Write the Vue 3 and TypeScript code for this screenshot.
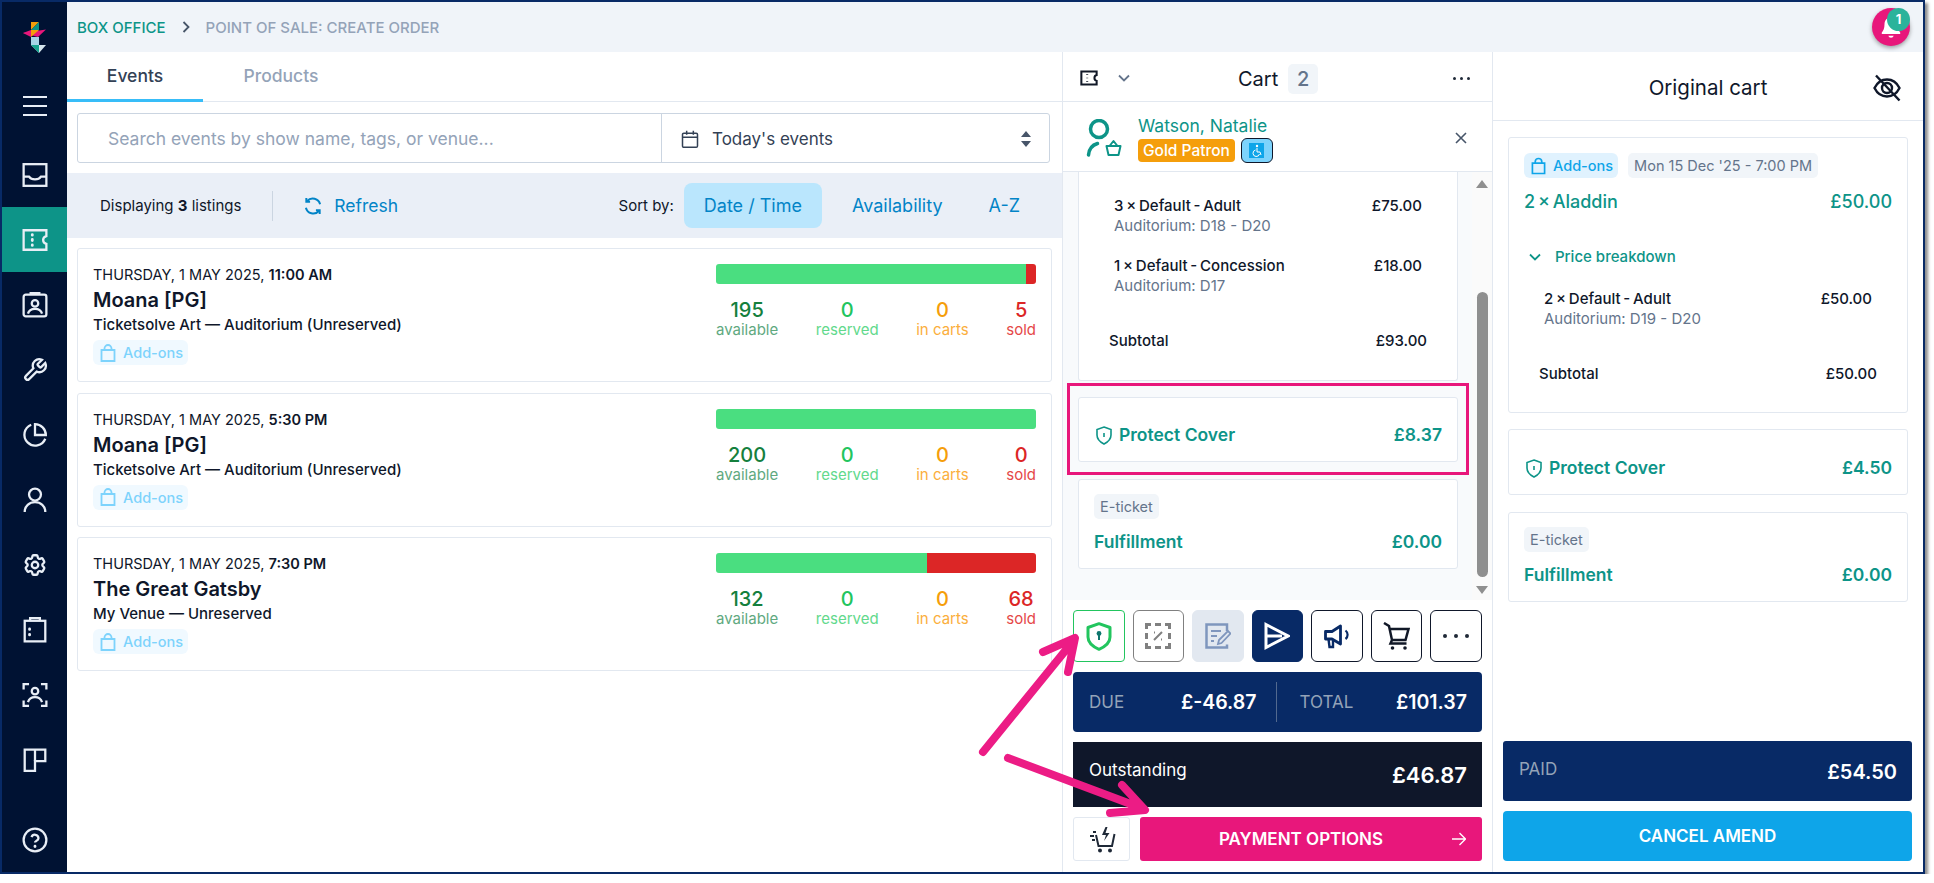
<script setup lang="ts">
interface Listing {
  date: string
  time: string
  title: string
  venue: string
  available: number
  reserved: number
  inCarts: number
  sold: number
}

interface Line {
  label: string
  seats: string
  price: string
}

const listings: Listing[] = [
  { date: 'THURSDAY, 1 MAY 2025,', time: '11:00 AM', title: 'Moana [PG]', venue: 'Ticketsolve Art — Auditorium (Unreserved)', available: 195, reserved: 0, inCarts: 0, sold: 5 },
  { date: 'THURSDAY, 1 MAY 2025,', time: '5:30 PM', title: 'Moana [PG]', venue: 'Ticketsolve Art — Auditorium (Unreserved)', available: 200, reserved: 0, inCarts: 0, sold: 0 },
  { date: 'THURSDAY, 1 MAY 2025,', time: '7:30 PM', title: 'The Great Gatsby', venue: 'My Venue — Unreserved', available: 132, reserved: 0, inCarts: 0, sold: 68 },
]

const cartLines: Line[] = [
  { label: '3 × Default - Adult', seats: 'Auditorium: D18 - D20', price: '£75.00' },
  { label: '1 × Default - Concession', seats: 'Auditorium: D17', price: '£18.00' },
]

const originalLines: Line[] = [
  { label: '2 × Default - Adult', seats: 'Auditorium: D19 - D20', price: '£50.00' },
]

const sideIcons = ['inbox', 'ticket', 'contact', 'wrench', 'pie', 'user', 'gear', 'clipboard', 'scan', 'layout']

function percent(part: number, item: Listing): string {
  return `${(part / (item.available + item.sold)) * 100}%`
}
</script>

<template>
  <div class="frame">
    <aside class="sidebar">
      <div class="logo">
        <svg width="24" height="31" viewBox="0 0 24 31">
          <polygon points="8,0 16,0 8,8" fill="#f59e0b" />
          <polygon points="16,0 16,8 8,8" fill="#0d9488" />
          <polygon points="0,11 23,7.5 15,15" fill="#e8177b" />
          <polygon points="8,8 16,8 8,15" fill="#f59e0b" />
          <polygon points="0,11 8,8 8,15" fill="#e8177b" />
          <rect x="8" y="15" width="8" height="8" fill="#a5d3e6" />
          <polygon points="8,23 23,23 16,31" fill="#d5e6ee" />
          <polygon points="8,23 16,23 16,31" fill="#14a38f" />
        </svg>
      </div>
      <div class="side-item menu-item">
        <svg width="24" height="24" viewBox="0 0 24 24" class="side-icon">
          <path d="M0 3h24M0 12h24M0 21h24" />
        </svg>
      </div>
      <div
        v-for="icon in sideIcons"
        :key="icon"
        class="side-item"
        :class="{ active: icon === 'ticket' }"
      >
        <svg width="26" height="26" viewBox="0 0 24 24" class="side-icon">
          <template v-if="icon === 'inbox'">
            <rect x="1.5" y="2" width="21" height="20" />
            <path d="M1.5 13.5h5c1 1.500 3 2.500 5.500 2.500s4.500-1 5.500-2.500h5" />
          </template>
          <template v-else-if="icon === 'ticket'">
            <path d="M1.5 3h21v5.500c-2 .5-3 2-3 3.500s1 3 3 3.500V21h-21z" />
            <path d="M9.5 7v.5M9.5 11.500v1M9.5 16.500v.5" class="thick" />
          </template>
          <template v-else-if="icon === 'contact'">
            <rect x="1.5" y="2.500" width="21" height="20" rx="2" />
            <path d="M8 2.500V1h8v1.500" />
            <circle cx="12" cy="10.5" r="3" />
            <path d="M5.500 20c.8-3 3.500-4.500 6.500-4.500s5.700 1.500 6.500 4.500" />
          </template>
          <template v-else-if="icon === 'wrench'">
            <path d="M14.7 6.3a1 1 0 0 0 0 1.4l1.6 1.6a1 1 0 0 0 1.4 0l3.77-3.77a6 6 0 0 1-7.94 7.94l-6.91 6.91a2.12 2.12 0 0 1-3-3l6.91-6.91a6 6 0 0 1 7.94-7.94l-3.76 3.76z" />
          </template>
          <template v-else-if="icon === 'pie'">
            <path d="M21.5 15.5A10 10 0 1 1 8.5 2.500" />
            <path d="M12 2a10 10 0 0 1 10 10H12z" />
          </template>
          <template v-else-if="icon === 'user'">
            <circle cx="12" cy="7" r="5.5" />
            <path d="M2.5 23c0-5.500 4.200-9 9.500-9s9.500 3.500 9.500 9" />
          </template>
          <template v-else-if="icon === 'gear'">
            <path d="M9.594 3.94c.09-.542.56-.94 1.11-.94h2.593c.55 0 1.02.398 1.11.94l.213 1.281c.063.374.313.686.645.87.074.04.147.083.22.127.325.196.72.257 1.075.124l1.217-.456a1.125 1.125 0 0 1 1.37.49l1.296 2.247a1.125 1.125 0 0 1-.26 1.431l-1.003.827c-.293.241-.438.613-.43.992a7.723 7.723 0 0 1 0 .255c-.008.378.137.75.43.991l1.004.827c.424.35.534.955.26 1.43l-1.298 2.247a1.125 1.125 0 0 1-1.369.491l-1.217-.456c-.355-.133-.75-.072-1.076.124a6.47 6.47 0 0 1-.22.128c-.331.183-.581.495-.644.869l-.213 1.281c-.09.543-.56.94-1.11.94h-2.594c-.55 0-1.019-.398-1.11-.94l-.213-1.281c-.062-.374-.312-.686-.644-.87a6.52 6.52 0 0 1-.22-.127c-.325-.196-.72-.257-1.076-.124l-1.217.456a1.125 1.125 0 0 1-1.369-.49l-1.297-2.247a1.125 1.125 0 0 1 .26-1.431l1.004-.827c.292-.24.437-.613.43-.991a6.932 6.932 0 0 1 0-.255c.007-.38-.138-.751-.43-.992l-1.004-.827a1.125 1.125 0 0 1-.26-1.43l1.297-2.247a1.125 1.125 0 0 1 1.37-.491l1.216.456c.356.133.751.072 1.076-.124.072-.044.146-.086.22-.128.332-.183.582-.495.644-.869l.214-1.28Z" />
            <circle cx="12" cy="12" r="3" />
          </template>
          <template v-else-if="icon === 'clipboard'">
            <rect x="2.5" y="3.5" width="19" height="19" />
            <path d="M7.5 3.5V1h9v2.500" />
            <path d="M7 11v.5M7 16v.5" class="thick" />
          </template>
          <template v-else-if="icon === 'scan'">
            <path d="M1.5 7V2h5M17.5 2h5v5M22.5 17v5h-5M6.5 22h-5v-5" />
            <circle cx="12" cy="8.5" r="3" />
            <path d="M5.5 18.500c1-3 3.500-4.500 6.500-4.500s5.500 1.500 6.500 4.500" />
          </template>
          <template v-else-if="icon === 'layout'">
            <path d="M2.5 2.500h19v10.500h-9.500v9h-9.500z" />
            <path d="M12 2.500V13" />
          </template>
        </svg>
      </div>
      <div class="side-item help-item">
        <svg width="26" height="26" viewBox="0 0 24 24" class="side-icon">
          <circle cx="12" cy="12" r="10.5" />
          <path d="M8.8 9.300a3.300 3.300 0 0 1 6.400 1c0 2.200-3.200 2.700-3.200 4" />
          <path d="M12 17.700v.3" class="thick" />
        </svg>
      </div>
    </aside>

    <div class="main">
      <header class="topbar">
        <nav class="crumbs">
          <span class="crumb-root">BOX OFFICE</span>
          <svg width="8" height="12" viewBox="0 0 8 12" class="crumb-sep">
            <path d="M1.5 1l5 5-5 5" />
          </svg>
          <span class="crumb-page">POINT OF SALE: CREATE ORDER</span>
        </nav>
        <div class="bell">
          <svg width="26" height="26" viewBox="0 0 24 24">
            <path d="M12 3c-3.500 0-6 2.800-6 6.500 0 4-1 6-2.500 7.500v1.500h17V17c-1.500-1.500-2.500-3.500-2.500-7.500C18 5.800 15.500 3 12 3z" fill="#fff" />
            <path d="M9.5 20a2.600 2.600 0 0 0 5 0z" fill="#fff" />
          </svg>
          <span class="bell-count">1</span>
        </div>
      </header>

      <div class="panels">
        <section class="listings">
          <div class="tabs">
            <div class="tab tab-active">Events</div>
            <div class="tab tab-products">Products</div>
          </div>
          <div class="search-wrap">
            <div class="search">
              <div class="search-text">Search events by show name, tags, or venue...</div>
              <div class="search-date">
                <svg width="20" height="20" viewBox="0 0 24 24" class="stroke-dark">
                  <rect x="3" y="5" width="18" height="17" rx="1.5" />
                  <path d="M3 10h18M8 2v5M16 2v5" />
                </svg>
                <span>Today's events</span>
                <svg width="12" height="18" viewBox="0 0 12 18" class="sort-icon">
                  <path d="M6 1l5 6H1zM6 17l5-6H1z" />
                </svg>
              </div>
            </div>
          </div>
          <div class="sortbar">
            <span class="count">Displaying <b>3</b> listings</span>
            <span class="sort-divider"></span>
            <span class="refresh">
              <svg width="20" height="20" viewBox="0 0 24 24">
                <path d="M20.5 10A9 9 0 0 0 5 6M3.500 14A9 9 0 0 0 19 18" />
                <path d="M4 2.500V7h4.500M20 21.500V17h-4.500" />
              </svg>
              Refresh
            </span>
            <span class="sort-label">Sort by:</span>
            <span class="sort-opt sort-on">Date / Time</span>
            <span class="sort-opt">Availability</span>
            <span class="sort-opt">A-Z</span>
          </div>
          <div class="listing-list">
            <article v-for="item in listings" :key="item.time" class="listing">
              <div class="listing-info">
                <div class="listing-date">{{ item.date }} <b>{{ item.time }}</b></div>
                <h2 class="listing-title">{{ item.title }}</h2>
                <div class="listing-venue">{{ item.venue }}</div>
                <span class="addons addons-pale">
                  <svg width="16" height="18" viewBox="0 0 16 18" class="bag">
                    <path d="M1.5 6h13v11h-13zM4.500 6V4.500a3.500 3.500 0 0 1 7 0V6" />
                  </svg>
                  Add-ons
                </span>
              </div>
              <div class="availability">
                <div class="bar">
                  <div class="bar-free" :style="{ width: percent(item.available, item) }"></div>
                  <div v-if="item.sold > 0" class="bar-sold"></div>
                </div>
                <div class="stats">
                  <div class="stat stat-available"><strong>{{ item.available }}</strong><span>available</span></div>
                  <div class="stat stat-reserved"><strong>{{ item.reserved }}</strong><span>reserved</span></div>
                  <div class="stat stat-carts"><strong>{{ item.inCarts }}</strong><span>in carts</span></div>
                  <div class="stat stat-sold"><strong>{{ item.sold }}</strong><span>sold</span></div>
                </div>
              </div>
            </article>
          </div>
        </section>

        <section class="cart">
          <div class="cart-head">
            <svg width="18" height="16" viewBox="0 0 24 22" class="cart-type">
              <path d="M1.5 2h21v5c-2 .5-3 2.200-3 4s1 3.500 3 4v5h-21z" />
              <path d="M9.5 6v1M9.5 10.500v1M9.5 15v1" />
            </svg>
            <svg width="12" height="8" viewBox="0 0 12 8" class="cart-chevron">
              <path d="M1 1.5l5 5 5-5" />
            </svg>
            <div class="cart-title">
              Cart
              <span class="cart-count">2</span>
            </div>
            <span class="dots"><i></i><i></i><i></i></span>
          </div>
          <div class="customer">
            <svg width="36" height="38" viewBox="0 0 36 38" class="customer-icon">
              <circle cx="13" cy="10" r="8.5" stroke-width="3.5" />
              <path d="M2.5 36c.5-6 4-10 9-11.500" stroke-width="3.5" />
              <path d="M20.5 27h14l-2 9h-10zM23.500 27l4-5 4 5" stroke-width="2" />
            </svg>
            <div class="customer-info">
              <div class="customer-name">Watson, Natalie</div>
              <div class="customer-tags">
                <span class="tag-gold">Gold Patron</span>
                <span class="tag-access">
                  <svg width="15" height="15" viewBox="0 0 15 15">
                    <rect width="15" height="15" fill="#0ea5e9" />
                    <circle cx="8" cy="3" r="1.2" fill="#fff" />
                    <path d="M8 5v4h3l1 3M6.500 7a3.300 3.300 0 1 0 4 4" fill="none" stroke="#fff" stroke-width="1" />
                  </svg>
                </span>
              </div>
            </div>
            <svg width="12" height="12" viewBox="0 0 12 12" class="customer-close">
              <path d="M1 1l10 10M11 1L1 11" />
            </svg>
          </div>

          <div class="cart-scroll">
            <div class="cart-items">
              <div class="box box-clipped">
                <div v-for="line in cartLines" :key="line.label" class="line">
                  <div>
                    <div class="line-label">{{ line.label }}</div>
                    <div class="line-seats">{{ line.seats }}</div>
                  </div>
                  <div class="line-price">{{ line.price }}</div>
                </div>
                <div class="subtotal subtotal-cart">
                  <span>Subtotal</span>
                  <span>£93.00</span>
                </div>
              </div>
              <div class="box box-cover highlighted">
                <div class="teal-row">
                  <span class="cover-name">
                    <svg width="16" height="19" viewBox="0 0 16 19" class="cover-shield">
                      <path d="M8 1l7 2.500V9c0 4-3 7-7 9-4-2-7-5-7-9V3.500z" />
                      <path d="M8 7v4" />
                    </svg>
                    Protect Cover
                  </span>
                  <span>£8.37</span>
                </div>
              </div>
              <div class="box box-fulfil">
                <span class="chip">E-ticket</span>
                <div class="teal-row fulfil-row">
                  <span>Fulfillment</span>
                  <span>£0.00</span>
                </div>
              </div>
            </div>
            <div class="scrollbar">
              <span class="scroll-up"></span>
              <span class="scroll-thumb"></span>
              <span class="scroll-down"></span>
            </div>
          </div>

          <div class="cart-foot">
            <div class="actions">
              <button type="button" class="action action-green">
                <svg width="26" height="29" viewBox="0 0 26 29" fill="none" stroke="#22c55e" stroke-width="3">
                  <path d="M13 1.700l11 3.800V15c0 5.500-4.500 9.500-11 12.300C6.500 24.500 2 20.500 2 15V5.500z" stroke-linejoin="round" />
                  <circle cx="13" cy="11.500" r="2.400" fill="#0f766e" stroke="none" />
                  <path d="M13 12v6" stroke="#0f766e" stroke-width="2" />
                </svg>
              </button>
              <button type="button" class="action action-grey">
                <svg width="26" height="26" viewBox="0 0 26 26" fill="none" stroke="#808080" stroke-width="3">
                  <path d="M1.5 6V1.500H6M10 1.500h6M20 1.500h4.500V6M24.500 10v6M24.500 20v4.500H20M16 24.500h-6M6 24.500H1.500V20M1.500 16v-6" />
                  <path d="M9 17l8-8M9 9.500h1M16 16.500h1" stroke-width="2" />
                </svg>
              </button>
              <button type="button" class="action action-off">
                <svg width="26" height="26" viewBox="0 0 26 26" fill="none" stroke="#7f96bd" stroke-width="2.5">
                  <path d="M22 8V1.500H1.500v23H22v-3" />
                  <path d="M6 8h10M6 13h6M6 18h3" stroke-width="2.2" />
                  <path d="M13 21l1-4 9-9 2.500 2.500-9 9.500z" stroke-width="1.8" fill="#e2e8f0" />
                </svg>
              </button>
              <button type="button" class="action action-navy">
                <svg width="26" height="28" viewBox="0 0 26 28" fill="none" stroke="#fff" stroke-width="3">
                  <path d="M2 2.500L24 14 2 25.500z" />
                  <path d="M2 14h16" />
                </svg>
              </button>
              <button type="button" class="action">
                <svg width="26" height="25" viewBox="0 0 26 25" fill="none" stroke="#082a66" stroke-width="2.8">
                  <path d="M1.500 7.500h6.500L16.500 2v18L8 15H1.500z" stroke-linejoin="round" />
                  <path d="M9 15v8H5.500l-1-8" stroke-width="2.4" />
                  <path d="M21.500 6.500c2.800 2.200 2.800 6.500 0 8.500" stroke-width="2.2" />
                </svg>
              </button>
              <button type="button" class="action">
                <svg width="27" height="28" viewBox="0 0 27 28" fill="none" stroke="#111827" stroke-width="2.5">
                  <path d="M1 1l5 3 3 14-1.500 3.500h16M6.500 7h19l-3 11H9" />
                  <circle cx="9.500" cy="26" r="1.800" fill="#111827" stroke="none" />
                  <circle cx="22" cy="26" r="1.800" fill="#111827" stroke="none" />
                </svg>
              </button>
              <button type="button" class="action">
                <span class="dots dots-big"><i></i><i></i><i></i></span>
              </button>
            </div>

            <div class="due-bar">
              <div class="due-part">
                <span class="due-label">DUE</span>
                <span class="due-value">£-46.87</span>
              </div>
              <span class="due-divider"></span>
              <div class="due-part">
                <span class="due-label">TOTAL</span>
                <span class="due-value">£101.37</span>
              </div>
            </div>

            <div class="outstanding">
              <span class="outstanding-label">Outstanding</span>
              <span class="outstanding-value">£46.87</span>
            </div>

            <div class="pay-row">
              <button type="button" class="quick">
                <svg width="28" height="28" viewBox="0 0 28 28" fill="none" stroke="#1f2937" stroke-width="2">
                  <path d="M8 10l2.500 11h13.500l2.500-12" />
                  <path d="M17.500 2l-3.500 8h4l-2 6 5.500-8h-4l2-6z" fill="#1f2937" stroke="none" />
                  <path d="M5 7h3M2 11h4M4 15h3" />
                  <circle cx="12" cy="25.5" r="2" fill="#1f2937" stroke="none" />
                  <circle cx="22" cy="25.5" r="2" fill="#1f2937" stroke="none" />
                </svg>
              </button>
              <button type="button" class="pay">
                PAYMENT OPTIONS
                <svg width="14" height="14" viewBox="0 0 14 14" class="pay-arrow">
                  <path d="M0 7h13M7.500 1l6 6-6 6" />
                </svg>
              </button>
            </div>
          </div>
        </section>

        <section class="original">
          <div class="original-head">
            <span class="original-title">Original cart</span>
            <svg width="28" height="28" viewBox="0 0 28 28" class="eye-off">
              <path d="M1.500 14C4.500 8 9 5.500 14 5.500S23.500 8 26.500 14c-3 6-7.500 8.500-12.500 8.500S4.500 20 1.500 14z" />
              <circle cx="14" cy="14" r="5" />
              <path d="M3 1.500L26.500 26.500" />
            </svg>
          </div>
          <div class="original-body">
            <div class="box box-show">
              <div class="pills">
                <span class="addons">
                  <svg width="15" height="18" viewBox="0 0 16 18" class="bag">
                    <path d="M1.500 6h13v11h-13zM4.500 6V4.500a3.500 3.500 0 0 1 7 0V6" />
                  </svg>
                  Add-ons
                </span>
                <span class="chip">Mon 15 Dec '25 - 7:00 PM</span>
              </div>
              <div class="teal-row show-row">
                <span>2 × Aladdin</span>
                <span>£50.00</span>
              </div>
              <div class="breakdown">
                <svg width="12" height="8" viewBox="0 0 12 8">
                  <path d="M1 1.500l5 5 5-5" />
                </svg>
                Price breakdown
              </div>
              <div v-for="line in originalLines" :key="line.label" class="line original-line">
                <div>
                  <div class="line-label">{{ line.label }}</div>
                  <div class="line-seats">{{ line.seats }}</div>
                </div>
                <div class="line-price">{{ line.price }}</div>
              </div>
              <div class="subtotal subtotal-original">
                <span>Subtotal</span>
                <span>£50.00</span>
              </div>
            </div>
            <div class="box box-cover">
              <div class="teal-row">
                <span class="cover-name">
                  <svg width="16" height="19" viewBox="0 0 16 19" class="cover-shield">
                    <path d="M8 1l7 2.500V9c0 4-3 7-7 9-4-2-7-5-7-9V3.500z" />
                    <path d="M8 7v4" />
                  </svg>
                  Protect Cover
                </span>
                <span>£4.50</span>
              </div>
            </div>
            <div class="box box-fulfil">
              <span class="chip">E-ticket</span>
              <div class="teal-row fulfil-row">
                <span>Fulfillment</span>
                <span>£0.00</span>
              </div>
            </div>
          </div>
          <div class="original-foot">
            <div class="paid">
              <span class="paid-label">PAID</span>
              <span class="paid-value">£54.50</span>
            </div>
            <button type="button" class="cancel">CANCEL AMEND</button>
          </div>
        </section>
      </div>
    </div>

    <svg class="arrows" width="1925" height="874" viewBox="0 0 1925 874">
      <path d="M983 752L1074 640M1043 652L1075 638L1068 672" />
      <path d="M1008 758L1144 809M1122 785L1145 810L1110 813" />
    </svg>
  </div>
</template>

<style scoped>
.frame {
  position: relative;
  display: flex;
  box-sizing: border-box;
  width: 1925px;
  height: 874px;
  border: 2px solid #082a66;
  background: #fff;
  box-shadow: 3px 3px 3px rgba(0, 0, 0, 0.45);
  color: #0f172a;
}

.sidebar {
  display: flex;
  flex-direction: column;
  flex: none;
  width: 65px;
  background: #001233;
}

.logo {
  display: flex;
  justify-content: center;
  align-items: flex-start;
  height: 71px;
  padding-top: 20px;
  box-sizing: border-box;
}

.side-item {
  display: flex;
  justify-content: center;
  align-items: center;
  flex: none;
  height: 65px;
}

.menu-item {
  margin-bottom: 4px;
}

.help-item {
  margin-top: auto;
}

.side-item.active {
  background: #0d9488;
}

.side-icon {
  fill: none;
  stroke: #e8eef6;
  stroke-width: 2.1;
}

.thick {
  stroke-width: 2.6;
  stroke-linecap: round;
}

.main {
  display: flex;
  flex-direction: column;
  flex: 1;
  min-width: 0;
}

.topbar {
  display: flex;
  justify-content: space-between;
  align-items: center;
  flex: none;
  height: 50px;
  padding: 0 13px 0 10px;
  background: #f0f4f9;
}

.crumbs {
  display: flex;
  align-items: center;
  font-size: 15px;
  font-weight: 500;
}

.crumb-root {
  color: #0d9488;
}

.crumb-sep {
  margin: 0 16px;
  fill: none;
  stroke: #475569;
  stroke-width: 1.8;
}

.crumb-page {
  color: #94a3b8;
}

.bell {
  position: relative;
  display: flex;
  justify-content: center;
  align-items: center;
  width: 38px;
  height: 38px;
  border-radius: 50%;
  background: #e8177b;
  box-shadow: 0 2px 4px rgba(0, 0, 0, 0.35);
}

.bell-count {
  position: absolute;
  top: 0;
  right: 0;
  width: 23px;
  height: 23px;
  border-radius: 50%;
  background: #2bb39b;
  color: #fff;
  font-size: 13px;
  font-weight: 700;
  line-height: 23px;
  text-align: center;
}

.panels {
  display: flex;
  flex: 1;
  min-height: 0;
}

.listings {
  display: flex;
  flex-direction: column;
  flex: none;
  width: 995px;
}

.tabs {
  display: flex;
  flex: none;
  height: 50px;
  border-bottom: 1px solid #e2e8f0;
  box-sizing: border-box;
}

.tab {
  width: 136px;
  color: #94a3b8;
  font-size: 17.5px;
  font-weight: 500;
  line-height: 47px;
  text-align: center;
}

.tab-products {
  width: 156px;
}

.tab-active {
  margin-bottom: -1px;
  border-bottom: 3px solid #38bdf8;
  color: #334155;
}

.search-wrap {
  flex: none;
  padding: 11px 12px 10px 10px;
}

.search {
  display: flex;
  box-sizing: border-box;
  height: 50px;
  border: 1px solid #cbd5e1;
  border-radius: 3px;
}

.search-text {
  flex: 1;
  padding-left: 30px;
  color: #94a3b8;
  font-size: 17.5px;
  line-height: 50px;
}

.search-date {
  display: flex;
  align-items: center;
  flex: none;
  box-sizing: border-box;
  width: 388px;
  padding: 2px 17px 0 18px;
  border-left: 1px solid #cbd5e1;
  color: #334155;
  font-size: 17px;
}

.search-date span {
  flex: 1;
  margin-left: 12px;
}

.stroke-dark {
  fill: none;
  stroke: #334155;
  stroke-width: 1.8;
}

.sort-icon {
  fill: #475569;
}

.sortbar {
  display: flex;
  align-items: center;
  flex: none;
  height: 65px;
  padding: 0 17px 0 33px;
  background: #eaeff7;
}

.count {
  font-size: 15px;
}

.sort-divider {
  width: 1px;
  height: 30px;
  margin: 0 30px 0 31px;
  background: #cbd5e1;
}

.refresh {
  display: flex;
  align-items: center;
  gap: 11px;
  margin-right: auto;
  color: #0284c7;
  font-size: 17.5px;
}

.refresh svg {
  fill: none;
  stroke: #0284c7;
  stroke-width: 2.4;
}

.sort-label {
  margin-right: 10px;
  font-size: 15px;
}

.sort-opt {
  padding: 0 25px;
  color: #0284c7;
  font-size: 18px;
  line-height: 45px;
}

.sort-opt:last-child {
  padding-left: 21px;
}

.sort-on {
  margin-right: 5px;
  padding: 0 20px;
  border-radius: 8px;
  background: #bae6fd;
}

.listing-list {
  display: flex;
  flex-direction: column;
  gap: 10.5px;
  padding: 10px 10px 0;
}

.listing {
  display: flex;
  justify-content: space-between;
  box-sizing: border-box;
  height: 134px;
  padding: 15px;
  border: 1px solid #e2e8f0;
  border-radius: 3px;
}

.listing-date {
  font-size: 14.5px;
  line-height: 20px;
  margin-top: 1px;
}

.listing-date b {
  font-weight: 600;
}

.listing-title {
  margin: 0;
  font-size: 20px;
  font-weight: 600;
  line-height: 30px;
}

.listing-venue {
  font-size: 15px;
  font-weight: 500;
  line-height: 20px;
}

.addons {
  display: inline-flex;
  align-items: center;
  gap: 7px;
  box-sizing: border-box;
  height: 25px;
  padding: 0 5px 0 7px;
  border-radius: 6px;
  background: #e0f2fe;
  color: #0ea5e9;
  font-size: 14.5px;
  font-weight: 500;
}

.addons-pale {
  margin-top: 5px;
  background: #f0f9ff;
  color: #7dd3fc;
}

.bag {
  fill: none;
  stroke: currentColor;
  stroke-width: 1.8;
}

.availability {
  flex: none;
  width: 320px;
}

.bar {
  display: flex;
  overflow: hidden;
  height: 20px;
  border-radius: 3px;
}

.bar-free {
  background: #4ade80;
}

.bar-sold {
  flex: 1;
  min-width: 10px;
  background: #dc2626;
}

.stats {
  display: flex;
  justify-content: space-between;
  margin-top: 15px;
}

.stat {
  display: flex;
  flex-direction: column;
  align-items: center;
}

.stat strong {
  font-size: 20px;
  font-weight: 500;
  line-height: 22px;
}

.stat span {
  font-size: 15px;
  line-height: 18px;
}

.stat-available strong { color: #15803d; }
.stat-available span { color: #5fa97f; }
.stat-reserved strong { color: #22c55e; }
.stat-reserved span { color: #62d98c; }
.stat-carts strong { color: #f59e0b; }
.stat-carts span { color: #fbae3c; }
.stat-sold strong { color: #dc2626; }
.stat-sold span { color: #e54848; }

.cart {
  display: flex;
  flex-direction: column;
  flex: none;
  box-sizing: border-box;
  width: 430px;
  border-left: 1px solid #e2e8f0;
}

.cart-head {
  display: flex;
  align-items: center;
  flex: none;
  box-sizing: border-box;
  height: 50px;
  padding: 3px 22px 0 17px;
  border-bottom: 1px solid #e2e8f0;
}

.cart-type {
  fill: none;
  stroke: #111827;
  stroke-width: 2.8;
}

.cart-chevron {
  margin-left: 20px;
  fill: none;
  stroke: #64748b;
  stroke-width: 1.8;
}

.cart-title {
  display: flex;
  align-items: center;
  gap: 10px;
  margin: 2px auto 0 108px;
  font-size: 20px;
}

.cart-count {
  width: 30px;
  border-radius: 5px;
  background: #f1f5f9;
  color: #64748b;
  font-weight: 500;
  line-height: 30px;
  text-align: center;
}

.dots {
  display: inline-flex;
  gap: 4px;
}

.dots i {
  width: 3px;
  height: 3px;
  border-radius: 50%;
  background: #1f2937;
}

.dots-big {
  gap: 7px;
}

.dots-big i {
  width: 4px;
  height: 4px;
}

.customer {
  display: flex;
  align-items: center;
  flex: none;
  box-sizing: border-box;
  height: 70px;
  padding: 2px 25px 0 23px;
  border-bottom: 1px solid #e2e8f0;
}

.customer-icon {
  flex: none;
  fill: none;
  stroke: #0d9488;
  stroke-linecap: round;
  stroke-linejoin: round;
}

.customer-info {
  flex: 1;
  margin: 2px 0 0 16px;
}

.customer-name {
  color: #0d9488;
  font-size: 17.5px;
  line-height: 24px;
}

.customer-tags {
  display: flex;
  align-items: center;
  gap: 6px;
}

.tag-gold {
  padding: 0 5px;
  border-radius: 4px;
  background: #f59e0b;
  color: #fff;
  font-size: 15.5px;
  font-weight: 500;
  line-height: 23px;
}

.tag-access {
  display: flex;
  justify-content: center;
  align-items: center;
  box-sizing: border-box;
  width: 32px;
  height: 25px;
  border: 1px solid #0f172a;
  border-radius: 6px;
  background: #7dd3fc;
}

.customer-close {
  fill: none;
  stroke: #475569;
  stroke-width: 1.6;
}

.cart-scroll {
  display: flex;
  flex: none;
  height: 428px;
  background: #f8fafc;
}

.cart-items {
  display: flex;
  flex-direction: column;
  flex: 1;
  padding: 0 14px 0 15px;
}

.box {
  box-sizing: border-box;
  border: 1px solid #e2e8f0;
  border-radius: 3px;
  background: #fff;
}

.box-clipped {
  height: 209px;
  padding: 24px 15px 0;
  border-top: 0;
  border-radius: 0 0 3px 3px;
}

.line {
  display: flex;
  justify-content: space-between;
  margin: 0 20px 20px;
}

.line-label {
  font-size: 15px;
  font-weight: 500;
  line-height: 20px;
  word-spacing: -1.2px;
}

.line-price {
  font-size: 15px;
  font-weight: 500;
  line-height: 20px;
}

.line-seats {
  color: #64748b;
  font-size: 15px;
  line-height: 20px;
}

.subtotal {
  display: flex;
  justify-content: space-between;
  margin: 0 15px;
  font-size: 15px;
  font-weight: 500;
  line-height: 20px;
}

.subtotal-cart {
  margin-top: 35px;
}

.box-cover {
  position: relative;
  height: 66px;
  margin-top: 16px;
  padding: 27px 15px 0;
}

.highlighted {
  height: 65px;
  padding-top: 26px;
}

.highlighted::after {
  content: '';
  position: absolute;
  inset: -15px -12px -14px -12px;
  border: 3px solid #e8177b;
  pointer-events: none;
}

.teal-row {
  display: flex;
  justify-content: space-between;
  color: #0d9488;
  font-size: 17.5px;
  font-weight: 600;
  line-height: 22px;
}

.cover-name {
  display: flex;
  align-items: center;
  gap: 7px;
  padding-left: 2px;
}

.cover-shield {
  fill: none;
  stroke: #0d9488;
  stroke-width: 1.6;
}

.box-fulfil {
  height: 90px;
  margin-top: 17px;
  padding: 14px 15px 0;
}

.chip {
  display: inline-block;
  padding: 0 6px;
  border-radius: 5px;
  background: #f1f5f9;
  color: #64748b;
  font-size: 14.5px;
  line-height: 25px;
}

.fulfil-row {
  margin-top: 12px;
}

.scrollbar {
  display: flex;
  flex-direction: column;
  align-items: center;
  flex: none;
  width: 20px;
  height: 428px;
  background: #fafafa;
}

.scroll-up,
.scroll-down {
  flex: none;
  width: 0;
  height: 0;
  border-right: 6px solid transparent;
  border-left: 6px solid transparent;
}

.scroll-up {
  margin-top: 8px;
  border-bottom: 8px solid #8f8f8f;
}

.scroll-thumb {
  flex: none;
  width: 11px;
  height: 285px;
  margin-top: 104px;
  border-radius: 6px;
  background: #8f8f8f;
}

.scroll-down {
  margin-top: 9px;
  border-top: 8px solid #8f8f8f;
}

.cart-foot {
  display: flex;
  flex-direction: column;
  flex: 1;
  gap: 10px;
  padding: 10px 10px 11px;
}

.actions {
  display: grid;
  grid-template-columns: repeat(7, 1fr);
  gap: 8px;
  height: 52px;
}

.action {
  display: flex;
  justify-content: center;
  align-items: center;
  padding: 0;
  border: 1px solid #0f172a;
  border-radius: 6px;
  background: #fff;
}

.action-green {
  border-color: #22c55e;
  border-radius: 4px;
}

.action-grey {
  border-color: #808080;
}

.action-off {
  border-color: #e2e8f0;
  background: #e2e8f0;
}

.action-navy {
  border-color: #082a66;
  background: #082a66;
}

.due-bar {
  display: flex;
  align-items: center;
  height: 60px;
  border-radius: 4px;
  background: #082a66;
}

.due-part {
  display: flex;
  justify-content: space-between;
  align-items: center;
  flex: 1;
  padding: 0 15px 0 16px;
}

.due-part:first-child {
  padding-right: 19px;
}

.due-part:last-child {
  padding-left: 23px;
}

.due-label {
  color: #94a3b8;
  font-size: 17px;
}

.due-value {
  color: #fff;
  font-size: 19.5px;
  font-weight: 600;
}

.due-divider {
  flex: none;
  width: 1px;
  height: 40px;
  background: #52698f;
}

.outstanding {
  display: flex;
  justify-content: space-between;
  height: 65px;
  padding: 0 15px 0 16px;
  background: #0f172a;
}

.outstanding-label {
  margin-top: 16px;
  color: #fff;
  font-size: 17px;
  line-height: 24px;
}

.outstanding-value {
  margin-top: 18px;
  color: #fff;
  font-size: 22px;
  font-weight: 600;
  line-height: 30px;
}

.pay-row {
  display: flex;
  gap: 10px;
  height: 44px;
}

.quick {
  display: flex;
  justify-content: center;
  align-items: center;
  flex: none;
  width: 57px;
  padding: 0;
  border: 1px solid #e2e8f0;
  border-radius: 3px;
  background: #fff;
}

.pay {
  position: relative;
  flex: 1;
  padding: 0 20px 0 0;
  border: 0;
  border-radius: 3px;
  background: #e8177b;
  color: #fff;
  font-family: inherit;
  font-size: 17px;
  font-weight: 600;
}

.pay-arrow {
  position: absolute;
  top: 15px;
  right: 16px;
  fill: none;
  stroke: #fff;
  stroke-width: 1.4;
}

.original {
  display: flex;
  flex-direction: column;
  flex: 1;
  min-width: 0;
  border-left: 1px solid #e2e8f0;
}

.original-head {
  position: relative;
  display: flex;
  justify-content: center;
  align-items: center;
  flex: none;
  box-sizing: border-box;
  height: 69px;
  padding-top: 3px;
  border-bottom: 1px solid #e2e8f0;
}

.original-title {
  font-size: 20.5px;
}

.eye-off {
  position: absolute;
  top: 22px;
  right: 22px;
  fill: none;
  stroke: #0f172a;
  stroke-width: 2.4;
}

.original-body {
  flex: 1;
  padding: 16px 15px 0 15px;
}

.box-show {
  height: 276px;
  padding: 15px;
}

.pills {
  display: flex;
  gap: 10px;
}

.show-row {
  margin-top: 11px;
  font-size: 18px;
  font-weight: 500;
  line-height: 26px;
  word-spacing: -2px;
}

.breakdown {
  display: flex;
  align-items: center;
  gap: 14px;
  margin: 30px 0 0 5px;
  color: #0d9488;
  font-size: 15px;
  font-weight: 500;
  line-height: 24px;
}

.breakdown svg {
  fill: none;
  stroke: #0d9488;
  stroke-width: 1.8;
}

.original-line {
  margin: 20px 20px 0;
}

.subtotal-original {
  margin-top: 35px;
}

.original-foot {
  display: flex;
  flex-direction: column;
  flex: none;
  gap: 10px;
  padding: 0 11px 11px 10px;
}

.paid {
  display: flex;
  justify-content: space-between;
  height: 60px;
  padding: 0 15px 0 16px;
  border-radius: 3px;
  background: #082a66;
}

.paid-label {
  margin-top: 16px;
  color: #94a3b8;
  font-size: 17px;
  line-height: 24px;
}

.paid-value {
  margin-top: 17px;
  color: #fff;
  font-size: 20px;
  font-weight: 600;
  line-height: 28px;
}

.cancel {
  height: 50px;
  padding: 0;
  border: 0;
  border-radius: 4px;
  background: #0ea5e9;
  color: #fff;
  font-family: inherit;
  font-size: 17px;
  font-weight: 600;
}

.arrows {
  position: absolute;
  top: -2px;
  left: -2px;
  fill: none;
  stroke: #ec1c85;
  stroke-width: 8;
  stroke-linecap: round;
  stroke-linejoin: round;
  pointer-events: none;
}
</style>

<style>
html,
body {
  margin: 0;
  background: #fff;
  font-family: Inter, "Liberation Sans", sans-serif;
}
</style>
